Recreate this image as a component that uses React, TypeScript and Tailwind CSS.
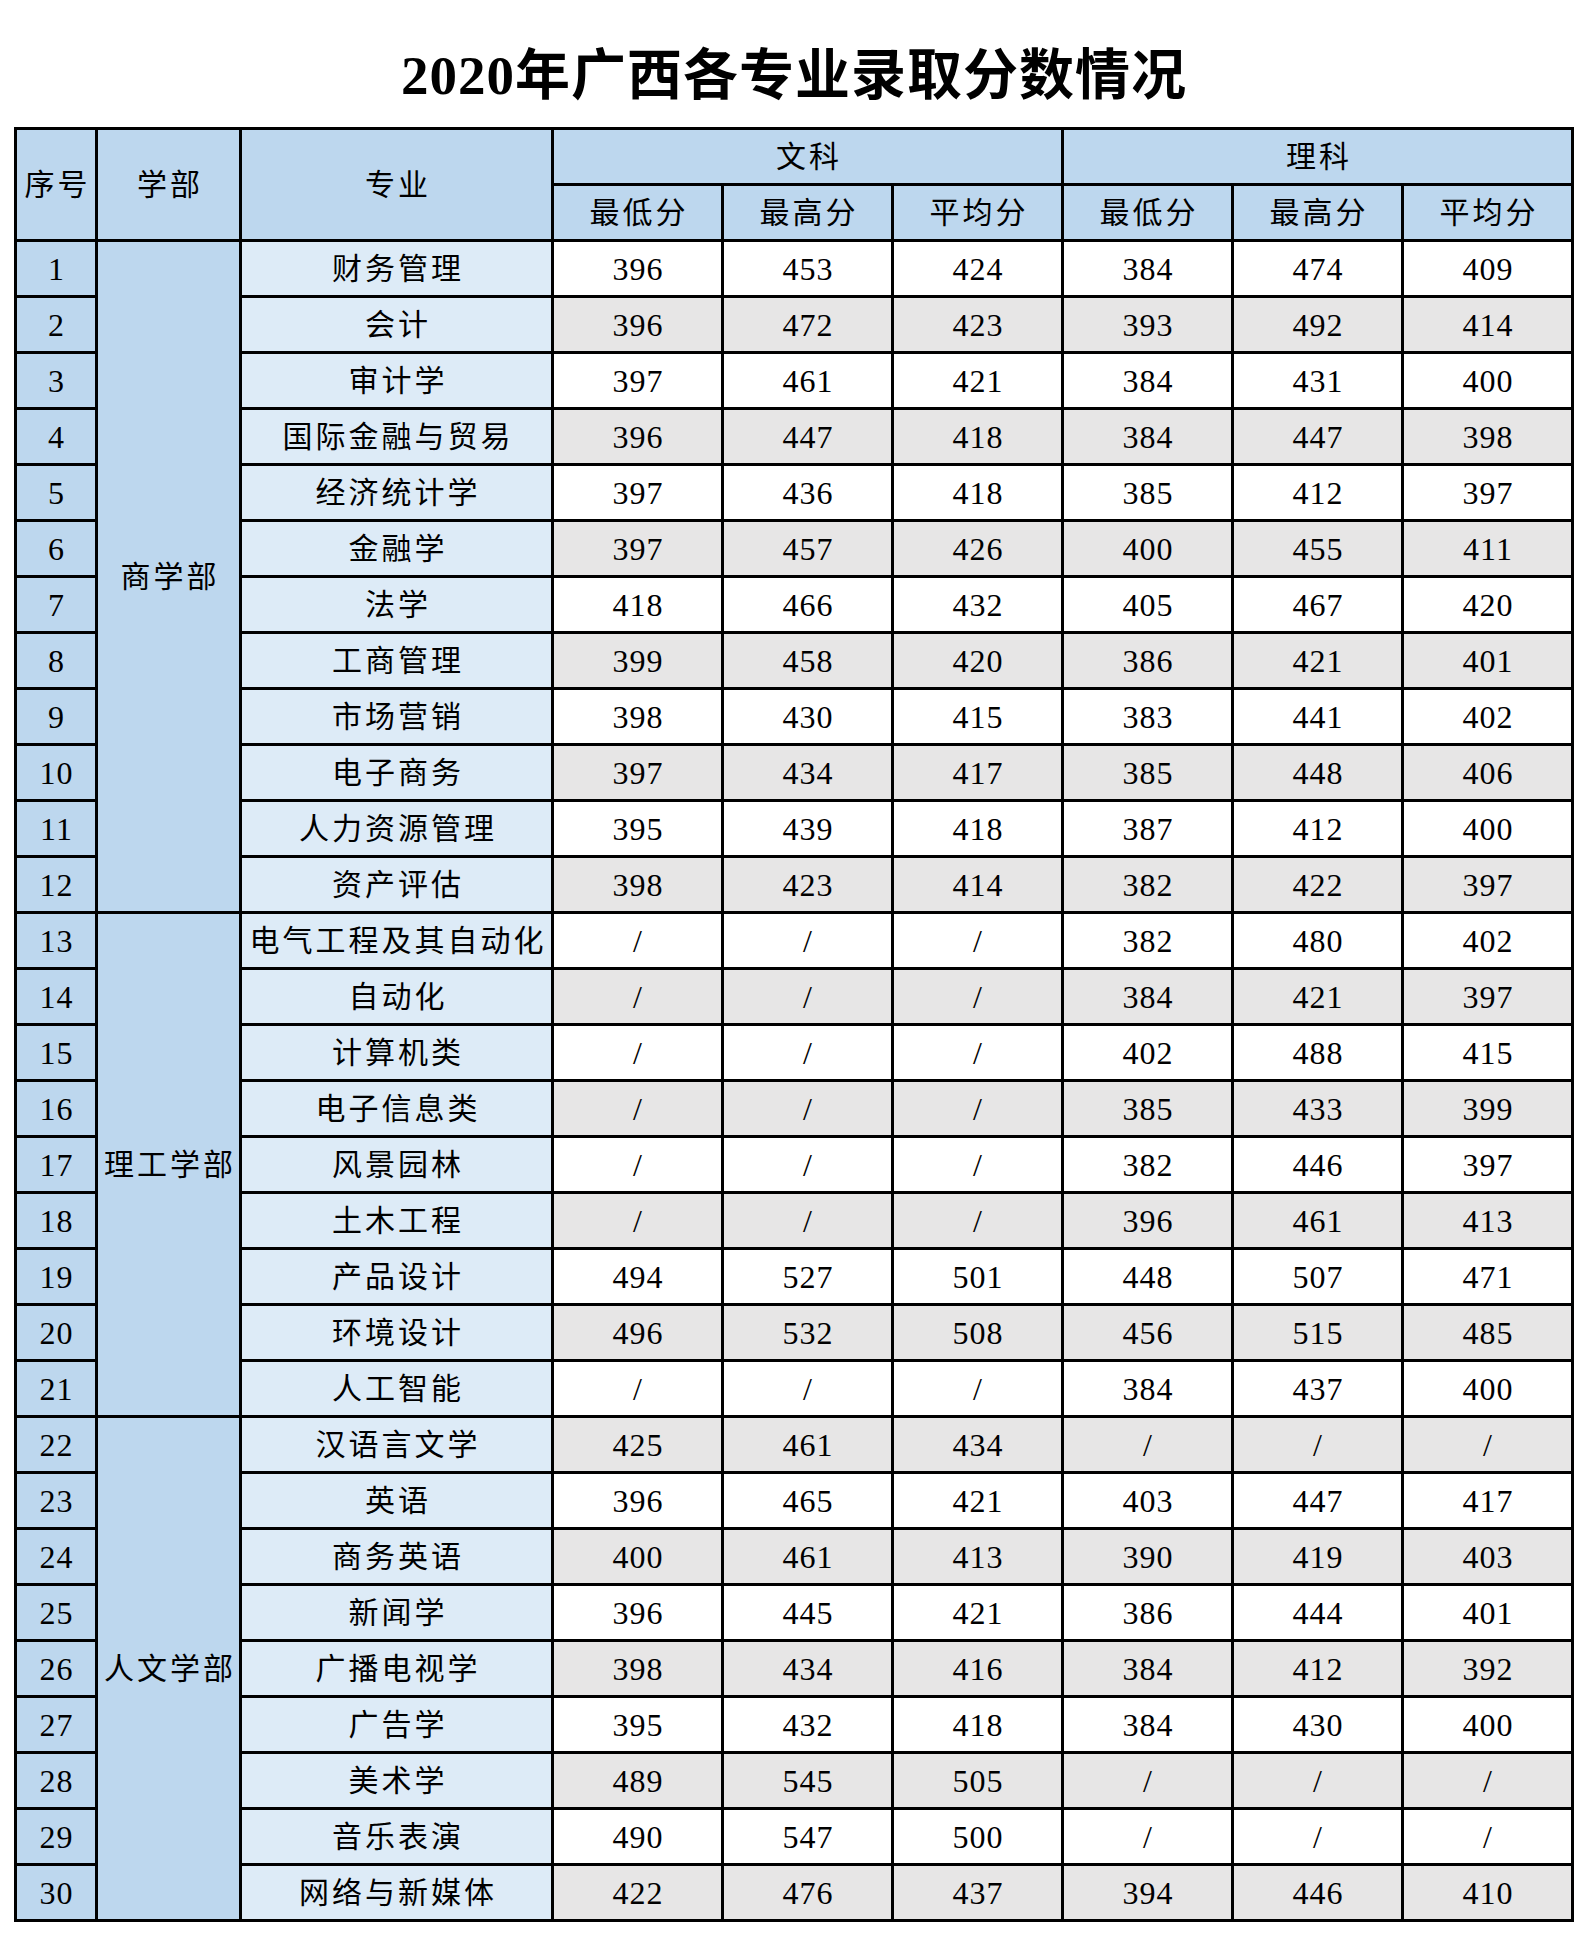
import React from "react";

type Row = [string, string, string, string, string, string, string];

const rows: Row[] = [
  ["财务管理", "396", "453", "424", "384", "474", "409"],
  ["会计", "396", "472", "423", "393", "492", "414"],
  ["审计学", "397", "461", "421", "384", "431", "400"],
  ["国际金融与贸易", "396", "447", "418", "384", "447", "398"],
  ["经济统计学", "397", "436", "418", "385", "412", "397"],
  ["金融学", "397", "457", "426", "400", "455", "411"],
  ["法学", "418", "466", "432", "405", "467", "420"],
  ["工商管理", "399", "458", "420", "386", "421", "401"],
  ["市场营销", "398", "430", "415", "383", "441", "402"],
  ["电子商务", "397", "434", "417", "385", "448", "406"],
  ["人力资源管理", "395", "439", "418", "387", "412", "400"],
  ["资产评估", "398", "423", "414", "382", "422", "397"],
  ["电气工程及其自动化", "/", "/", "/", "382", "480", "402"],
  ["自动化", "/", "/", "/", "384", "421", "397"],
  ["计算机类", "/", "/", "/", "402", "488", "415"],
  ["电子信息类", "/", "/", "/", "385", "433", "399"],
  ["风景园林", "/", "/", "/", "382", "446", "397"],
  ["土木工程", "/", "/", "/", "396", "461", "413"],
  ["产品设计", "494", "527", "501", "448", "507", "471"],
  ["环境设计", "496", "532", "508", "456", "515", "485"],
  ["人工智能", "/", "/", "/", "384", "437", "400"],
  ["汉语言文学", "425", "461", "434", "/", "/", "/"],
  ["英语", "396", "465", "421", "403", "447", "417"],
  ["商务英语", "400", "461", "413", "390", "419", "403"],
  ["新闻学", "396", "445", "421", "386", "444", "401"],
  ["广播电视学", "398", "434", "416", "384", "412", "392"],
  ["广告学", "395", "432", "418", "384", "430", "400"],
  ["美术学", "489", "545", "505", "/", "/", "/"],
  ["音乐表演", "490", "547", "500", "/", "/", "/"],
  ["网络与新媒体", "422", "476", "437", "394", "446", "410"],
];

// 学部 cells that span several rows, keyed by the first row index
const depts: Record<number, { name: string; span: string }> = {
  0: { name: "商学部", span: "row-span-12" },
  12: { name: "理工学部", span: "row-span-9" },
  21: { name: "人文学部", span: "row-span-9" },
};

const cell = "flex items-center justify-center whitespace-nowrap";
const zh = "text-[30px] tracking-[3px] pl-[3px]";
const num = "text-[32px] tracking-[1px] pl-[1px]";

const App = () => {
  return (
    <div
      className="w-full min-h-[1936px] bg-white text-black"
      style={{ fontFamily: '"Liberation Serif", "Noto Sans CJK SC", serif' }}
    >
      <div className="h-[127px] pt-[24px] flex items-center justify-center">
        <h1 className="text-[55px] leading-none font-bold tracking-[1px]">2020年广西各专业录取分数情况</h1>
      </div>

      <div className="mx-auto w-fit grid grid-cols-[78px_141px_309px_repeat(6,167px)] auto-rows-[53px] gap-[3px] p-[3px] bg-black">
        {/* header */}
        <div className={`${cell} ${zh} row-span-2 bg-[#bdd7ee]`}>序号</div>
        <div className={`${cell} ${zh} row-span-2 bg-[#bdd7ee]`}>学部</div>
        <div className={`${cell} ${zh} row-span-2 bg-[#bdd7ee]`}>专业</div>
        <div className={`${cell} ${zh} col-span-3 bg-[#bdd7ee]`}>文科</div>
        <div className={`${cell} ${zh} col-span-3 bg-[#bdd7ee]`}>理科</div>
        {["最低分", "最高分", "平均分", "最低分", "最高分", "平均分"].map((h, i) => (
          <div key={i} className={`${cell} ${zh} bg-[#bdd7ee]`}>
            {h}
          </div>
        ))}

        {/* body */}
        {rows.map((r, i) => {
          const bg = i % 2 === 0 ? "bg-white" : "bg-[#e7e6e6]";
          const dept = depts[i];
          return (
            <React.Fragment key={i}>
              <div className={`${cell} ${num} col-start-1 bg-[#bdd7ee]`}>{i + 1}</div>
              {dept && (
                <div className={`${cell} ${zh} col-start-2 ${dept.span} bg-[#bdd7ee]`}>{dept.name}</div>
              )}
              <div className={`${cell} ${zh} col-start-3 bg-[#ddebf7]`}>{r[0]}</div>
              {r.slice(1).map((v, j) => (
                <div key={j} className={`${cell} ${num} ${bg}`}>
                  {v}
                </div>
              ))}
            </React.Fragment>
          );
        })}
      </div>
    </div>
  );
};

export default App;
